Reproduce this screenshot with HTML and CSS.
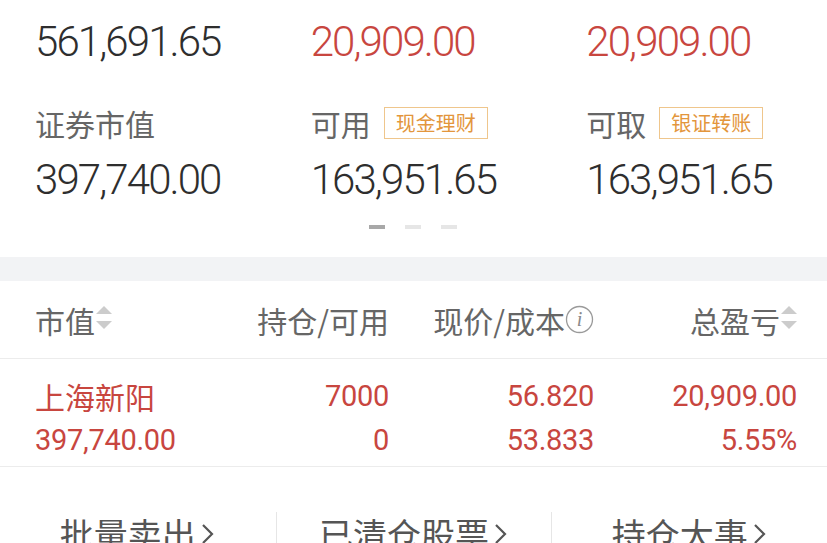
FILE: index.html
```html
<!DOCTYPE html>
<html lang="zh-CN">
<head>
<meta charset="utf-8">
<title>持仓</title>
<link rel="stylesheet" href="styles.css">
</head>
<body>
<div class="page">
  <section class="summary">
    <div class="cell">
      <div class="num num-top">561,691.65</div>
      <div class="label">证券市值</div>
      <div class="num">397,740.00</div>
    </div>
    <div class="cell">
      <div class="num num-top red">20,909.00</div>
      <div class="label">可用<span class="badge">现金理财</span></div>
      <div class="num">163,951.65</div>
    </div>
    <div class="cell">
      <div class="num num-top red">20,909.00</div>
      <div class="label">可取<span class="badge">银证转账</span></div>
      <div class="num">163,951.65</div>
    </div>
    <div class="dots">
      <span class="dot active"></span><span class="dot"></span><span class="dot"></span>
    </div>
  </section>

  <div class="band"></div>

  <section class="table">
    <div class="row head">
      <div class="c c1">市值<svg class="sort" width="16" height="25" viewBox="0 0 16 25"><polygon points="8,0 16,8 0,8" fill="#cccccc"/><polygon points="0,15 16,15 8,23" fill="#cccccc"/></svg></div>
      <div class="c">持仓/可用</div>
      <div class="c">现价/成本<svg class="info" width="29" height="29" viewBox="0 0 29 29"><circle cx="14.5" cy="14.5" r="13" fill="none" stroke="#9a9a9a" stroke-width="1.3"/><text x="14.5" y="21" text-anchor="middle" font-family="Liberation Serif, serif" font-style="italic" font-size="20" fill="#8a8a8a">i</text></svg></div>
      <div class="c">总盈亏<svg class="sort" width="16" height="25" viewBox="0 0 16 25"><polygon points="8,0 16,8 0,8" fill="#cccccc"/><polygon points="0,15 16,15 8,23" fill="#cccccc"/></svg></div>
    </div>
    <div class="row data">
      <div class="c c1">
        <div class="name">上海新阳</div>
        <div class="dnum">397,740.00</div>
      </div>
      <div class="c">
        <div class="dnum">7000</div>
        <div class="dnum">0</div>
      </div>
      <div class="c">
        <div class="dnum">56.820</div>
        <div class="dnum">53.833</div>
      </div>
      <div class="c">
        <div class="dnum">20,909.00</div>
        <div class="dnum">5.55%</div>
      </div>
    </div>
  </section>

  <nav class="actions">
    <a class="act">批量卖出<svg class="chev" width="16" height="24" viewBox="0 0 16 24"><polyline points="3,3 12,12 3,21" fill="none" stroke="#555" stroke-width="2.2"/></svg></a>
    <a class="act sep">已清仓股票<svg class="chev" width="16" height="24" viewBox="0 0 16 24"><polyline points="3,3 12,12 3,21" fill="none" stroke="#555" stroke-width="2.2"/></svg></a>
    <a class="act sep">持仓大事<svg class="chev" width="16" height="24" viewBox="0 0 16 24"><polyline points="3,3 12,12 3,21" fill="none" stroke="#555" stroke-width="2.2"/></svg></a>
  </nav>
</div>
</body>
</html>
```
FILE: styles.css
```css
html, body {
  margin: 0;
  padding: 0;
  background: #ffffff;
}
body {
  font-family: "Noto Sans CJK SC", "Noto Sans", sans-serif;
  color: #333;
  overflow: hidden;
}
.page {
  width: 827px;
}
.summary {
  display: grid;
  grid-template-columns: repeat(3, 1fr);
  padding-top: 12px;
  padding-bottom: 28px;
}
.cell {
  padding-left: 35px;
  display: flex;
  flex-direction: column;
}
.num {
  font-family: Roboto, "Liberation Sans", sans-serif;
  font-weight: 300;
  font-size: 42px;
  letter-spacing: -1.9px;
  line-height: 52px;
  color: #2e2e2e;
  height: 52px;
}
.num-top {
  line-height: 60px;
  height: 60px;
  margin-bottom: 31px;
}
.red {
  color: #c8463f;
}
.label {
  display: flex;
  align-items: center;
  gap: 13px;
  height: 40px;
  font-size: 30px;
  color: #666;
  margin-bottom: 11px;
}
.badge {
  font-size: 20px;
  line-height: 30px;
  height: 30px;
  padding: 0 11px;
  border: 1px solid #efc68c;
  color: #e3963c;
}
.dots {
  grid-column: 1 / 4;
  display: flex;
  justify-content: center;
  gap: 20px;
  margin-top: 19px;
}
.dot {
  width: 16px;
  height: 4px;
  background: #e6e6e6;
}
.dot.active {
  background: #a8a8a8;
}
.band {
  height: 24px;
  background: #f2f3f5;
}
.row {
  display: grid;
  grid-template-columns: 1fr 205px 205px 203px;
  padding: 0 30px 0 35px;
  border-bottom: 1px solid #ececec;
}
.c {
  display: flex;
  flex-direction: column;
  align-items: flex-end;
}
.c1 {
  align-items: flex-start;
}
.head {
  height: 77px;
  align-items: center;
}
.head .c {
  flex-direction: row;
  align-items: center;
  justify-content: flex-end;
  font-size: 30px;
  color: #666;
  line-height: 40px;
}
.head .c1 {
  justify-content: flex-start;
}
.sort {
  margin-left: 1px;
  margin-top: -2px;
}
.info {
  margin-left: 0;
}
.data {
  padding-top: 15px;
  padding-bottom: 4px;
  color: #c8463f;
}
.name {
  font-size: 30px;
  line-height: 44px;
}
.dnum {
  font-family: Roboto, "Liberation Sans", sans-serif;
  font-size: 29px;
  line-height: 44px;
  letter-spacing: -0.3px;
}
.actions {
  display: grid;
  grid-template-columns: repeat(3, 1fr);
  padding-top: 45px;
}
.act {
  display: flex;
  justify-content: center;
  align-items: flex-start;
  height: 60px;
  font-size: 34px;
  color: #555;
  line-height: 44px;
  align-self: start;
}
.sep {
  border-left: 1px solid #e6e6e6;
}
.chev {
  margin-left: 4px;
  margin-top: 10px;
}
```
